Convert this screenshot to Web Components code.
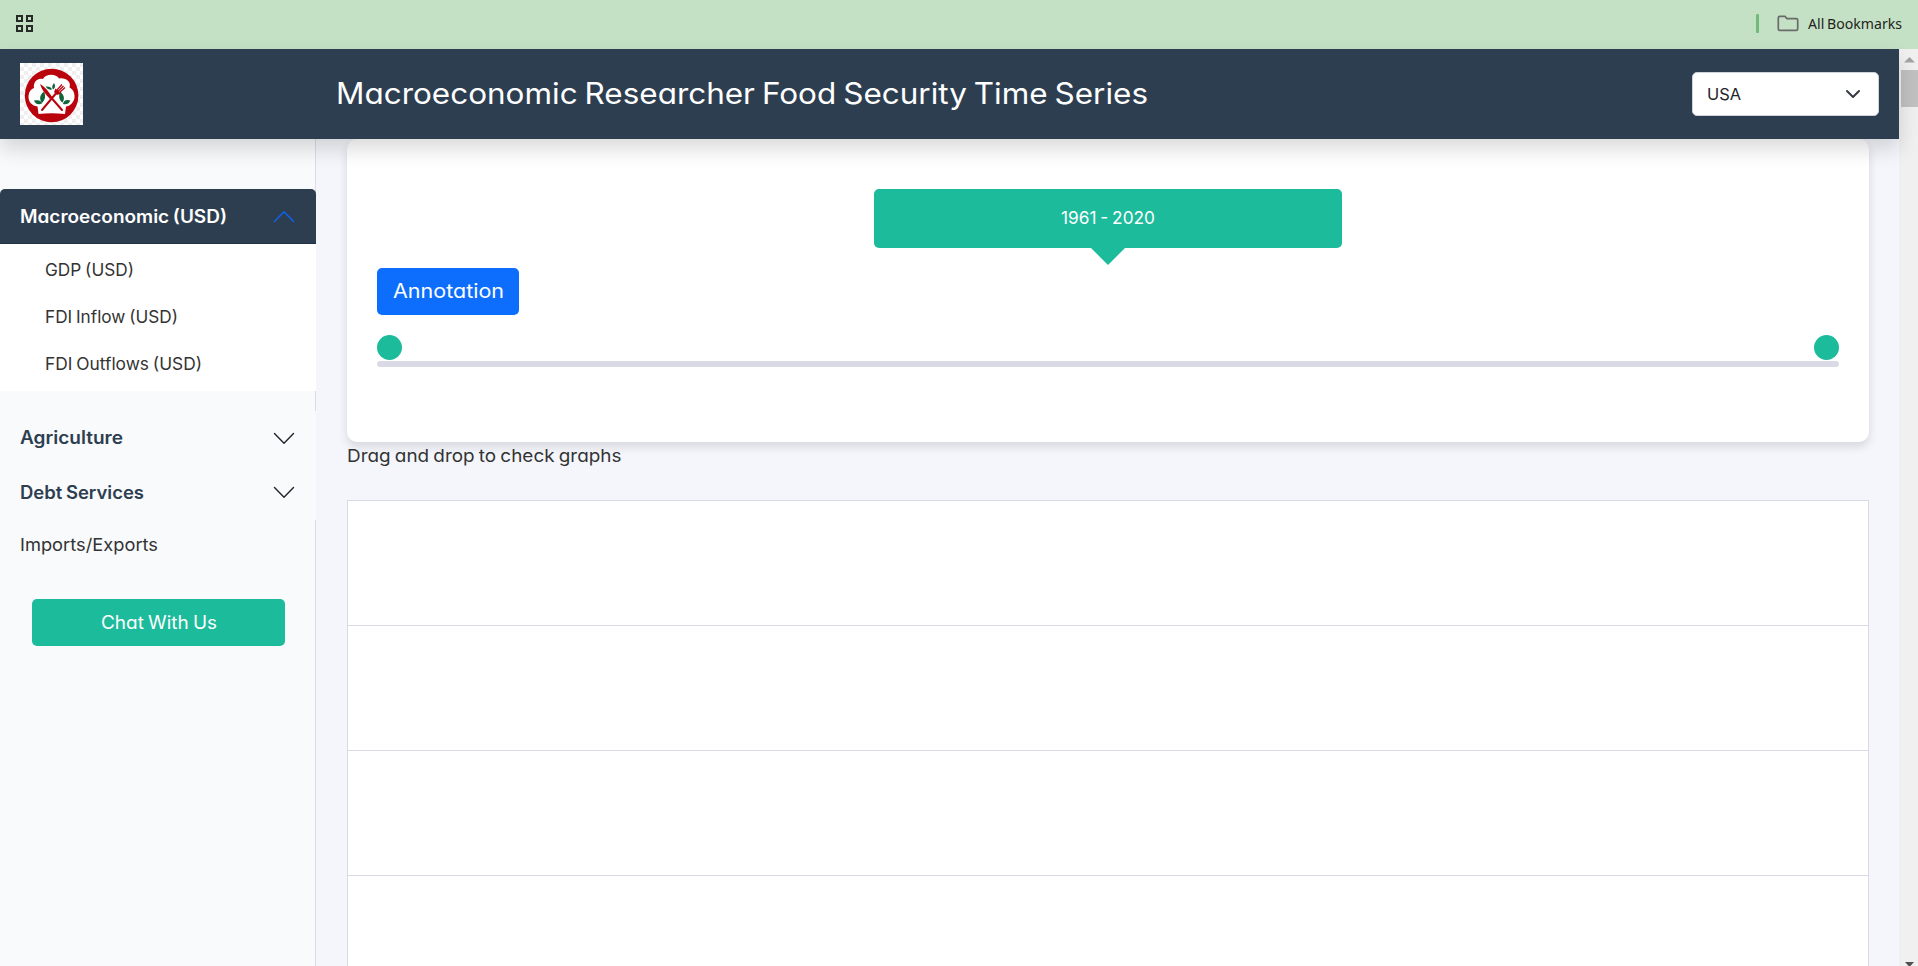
<!DOCTYPE html>
<html lang="en"><head><meta charset="utf-8"><title>Food Security Time Series</title>
<style>
html,body{margin:0;height:100%;overflow:hidden}
body{font-family:Inter,"Open Sans",sans-serif;font-feature-settings:"cv11";color:#212529;background:#f4f6fb}
</style></head><body>
<food-app></food-app>
<script>
const define=(name,html,ready)=>customElements.define(name,class extends HTMLElement{
  constructor(){super();this.attachShadow({mode:'open'}).innerHTML=html;}
  connectedCallback(){if(ready)ready(this);}
});

/* Text widened so that its line is as wide as the w attribute. */
define('fit-text',`<style>:host{display:inline-block;white-space:nowrap;flex:none;vertical-align:top}span{display:inline-block;transform-origin:0 50%;word-spacing:-.06em}</style><span><slot></slot></span>`,el=>{
  const s=el.shadowRoot.querySelector('span'),w=+el.getAttribute('w');
  s.style.transform='scaleX('+w/s.getBoundingClientRect().width+')';
  el.style.width=w+'px';
});

define('bookmarks-bar',`<style>
:host{display:flex;box-sizing:border-box;height:49px;background:#c5e1c5;align-items:center;padding:0 16px 0 15px;font:15px "Noto Sans","Open Sans",sans-serif;color:#1f2420}
.g{flex:1;height:20px}.bar{width:3px;height:19px;border-radius:1px;background:#72b97a;margin-right:18px;margin-top:-2px}
.f{margin-right:9px;margin-top:-2px}fit-text{line-height:20px;margin-top:-3px}svg{display:block}
</style><div class="g"><svg width="20" height="20" viewBox="0 0 20 20" fill="none" stroke="#272b28" stroke-width="2"><path d="M2 1h5v5H2zM12 1h5v5h-5zM2 11h5v5H2zM12 11h5v5h-5z"/></svg></div>
<div class="bar"></div><svg class="f" width="22" height="17" viewBox="0 0 22 17" fill="none" stroke="#686b69" stroke-width="1.7"><path d="M2.8 1.3h5.1l2 2.3h9.3q1.5 0 1.5 1.5v8.8q0 1.5-1.5 1.5H2.8q-1.5 0-1.5-1.5V2.8q0-1.5 1.5-1.5z"/></svg>
<fit-text w="94">All Bookmarks</fit-text>`);

define('brand-logo',`<style>:host{display:block;width:63px;height:62px}svg{display:block}</style>
<svg width="63" height="62" viewBox="0 0 63 62"><defs><pattern id="c" width="8" height="8" patternUnits="userSpaceOnUse"><path fill="#fff" d="M0 0h8v8H0z"/><path fill="#efefef" d="M4 0h4v4H4zM0 4h4v4H0z"/></pattern></defs>
<path fill="url(#c)" d="M0 0h63v62H0z"/><circle cx="31.6" cy="32.5" r="26.8" fill="#b9030d"/>
<path fill="#fff" d="M18.500 51 17.500 43.500C11 42.500 8.500 38 8.500 34 8.500 29 11 26 14 25 13 18.500 18 14.500 23 16 26 10.500 36 10.500 39 15.500 46 14.500 51.500 19 49.500 24.500 53 26 55 30.500 54.500 34.500 54 39 50 43.500 46 43.500L45 51Q31 49.500 18.500 51z"/>
<g fill="#11633a"><path d="M24 28.500c-5 4-4.500 8-2 11.500C26 36 25.500 32 24 28.500zM14 37.500c5-1 7 0 8 3-4 2-7 0-8-3zM40 28.500c5 4 4.500 8 2.500 11-3.500-2-4-6.500-2.500-11zM50.500 37.500c-4-1.500-7 0-7.500 3.500 4 1 6-.5 7.500-3.500zM25.500 23.500q5.500-.5 6.500 3-4 1-6.500-3zM34 20q2.500 4-1 6.500-2-3 1-6.500z"/></g>
<path stroke="#b9030d" stroke-width="2" stroke-linecap="round" fill="none" d="M22 47 38 28M42 47 28 31"/><path fill="#b9030d" d="M20 21q6 3 12 13l-2 2Q22 28 20 21z"/><path fill="none" stroke="#b9030d" stroke-width="1.200" d="M37 27l5-5.500M38.500 28l5-5M39.500 29.500l5.500-5"/><path fill="#b9030d" d="M35.500 25.500 41 30.500 37 32 34 29z"/></svg>`);

define('country-select',`<style>:host{display:flex;box-sizing:border-box;width:187px;height:44px;background:#fff;border:1px solid #ced4da;border-radius:5px;align-items:center;justify-content:space-between;padding:0 17px 0 14px;font-size:16.500px;line-height:42px}svg{display:block}</style><fit-text w="34">USA</fit-text><svg width="16" height="10" viewBox="0 0 16 10" fill="none" stroke="#343a40" stroke-width="2" stroke-linecap="round" stroke-linejoin="round"><path d="m2 2 6 6 6-6"/></svg>`);

define('app-header',`<style>:host{display:flex;box-sizing:border-box;height:90px;background:#2d3e50;align-items:center;padding:0 20px;position:relative;z-index:2;box-shadow:0 10px 20px rgba(0,0,0,.15)}
.t{flex:1;margin-left:253px;color:#fff;font-size:29.500px;line-height:42px;height:44px}</style><brand-logo></brand-logo><div class="t"><fit-text w="812">Macroeconomic Researcher Food Security Time Series</fit-text></div><country-select></country-select>`);

define('menu-heading',`<style>:host{display:flex;box-sizing:border-box;width:316px;height:55px;background:#f8fafc;color:#2d3e50;padding:0 21.500px 0 20px;align-items:center;justify-content:space-between;font-weight:600;font-size:18px;--c:#212529}
:host([open]){background:#2d3e50;color:#fff;border-radius:5px 5px 0 0;box-shadow:inset 0 -1px 0 #223142;--c:#0d63f2}:host([open]) svg{transform:scaleY(-1)}svg{display:block}</style><slot></slot><svg width="22" height="13" viewBox="0 0 22 13" fill="none" stroke="var(--c)" stroke-width="1.400" stroke-linecap="round" stroke-linejoin="round"><path d="m1.500 1.500 9.500 9.700 9.500-9.700"/></svg>`);

define('side-menu',`<style>:host{display:block;box-sizing:border-box;width:316px;flex:none;border-right:1px solid #dcdde3;background:#f8fafc;padding-top:50px}
.sub{width:316px;height:147px;background:#fff;box-sizing:border-box;padding:3px 0 0 44.500px;font-size:17px;margin-bottom:20px;color:#333}.sub div{height:47px;line-height:47px}
.link{height:53px;line-height:49px;padding-left:20px;font-size:17.500px;color:#333}
.chat{margin:26px 30px 0 32px;height:47px;border-radius:5px;background:#1cbb9b;color:#fff;display:flex;justify-content:center;line-height:47px;font-size:18px}.sub~menu-heading{height:54px}.sub~menu-heading+menu-heading{height:55px}.sub~menu-heading fit-text{margin-top:-1px}</style>
<menu-heading open><fit-text w="207">Macroeconomic (USD)</fit-text></menu-heading>
<div class="sub"><div><fit-text w="89">GDP (USD)</fit-text></div><div><fit-text w="133">FDI Inflow (USD)</fit-text></div><div><fit-text w="157">FDI Outflows (USD)</fit-text></div></div>
<menu-heading><fit-text w="103">Agriculture</fit-text></menu-heading><menu-heading><fit-text w="124">Debt Services</fit-text></menu-heading>
<div class="link"><fit-text w="138">Imports/Exports</fit-text></div><div class="chat"><fit-text w="116">Chat With Us</fit-text></div>`);

define('year-range',`<style>:host{display:block;box-sizing:border-box;height:303px;background:#fff;border-radius:10px;padding:50px 30px 0;box-shadow:0 5px 10px rgba(0,0,0,.12)}
.tip{width:468px;height:59px;margin:0 auto;background:#1cbb9b;border-radius:5px;color:#fff;font-size:17.500px;line-height:58px;display:flex;justify-content:center;position:relative}
.tip:after{content:"";position:absolute;top:59px;left:217px;border:17px solid transparent;border-top-color:#1cbb9b;border-bottom:0}
.btn{margin-top:20px;width:142px;height:47px;border-radius:5px;background:#0d6efd;color:#fff;font-size:19.500px;line-height:47px;display:flex;justify-content:center}
.k{display:flex;justify-content:space-between;margin-top:20px}.k i{width:25px;height:25px;border-radius:50%;background:#1cbb9b}.track{height:6px;margin-top:1px;border-radius:3px;background:#d9dae5}</style>
<div class="tip"><fit-text w="94">1961 - 2020</fit-text></div><div class="btn"><fit-text w="111">Annotation</fit-text></div><div class="k"><i></i><i></i></div><div class="track"></div>`);

define('graph-slots',`<style>:host{display:block;box-sizing:border-box;border:1px solid #d9dae3;background:#fff}div{height:124px;border-bottom:1px solid #d9dae3}</style><div></div><div></div><div></div><div></div>`);

define('scroll-rail',`<style>:host{display:block;width:19px;flex:none;background:#f0f0f0;box-sizing:border-box;height:917px;overflow:hidden}.u{height:21px;display:flex;align-items:end;padding-left:5px;padding-bottom:7px;box-sizing:border-box}.t{height:37px;margin-left:2px;background:#c1c1c1}svg{display:block}.d{margin:855px 0 0 6px}</style><div class="u"><svg width="11" height="6"><path d="M5.500 0 11 5.500H0z" fill="#a3a3a3"/></svg></div><div class="t"></div><svg class="d" width="9" height="5"><path d="M0 0h9L4.500 5z" fill="#505050"/></svg>`);

define('food-app',`<style>:host{display:block;height:966px;overflow:hidden}.page{display:flex;height:917px}.site{flex:1;display:flex;flex-direction:column}.body{flex:1;display:flex;min-height:0}
main{flex:1;padding:0 30px 0 31px;overflow:hidden;background:#f4f6fb}.hint{height:58px;font-size:17.500px;line-height:28px;color:#333}.hint fit-text{margin-left:-.5px}</style>
<bookmarks-bar></bookmarks-bar><div class="page"><div class="site"><app-header></app-header><div class="body"><side-menu></side-menu><main><year-range></year-range><div class="hint"><fit-text w="274.5">Drag and drop to check graphs</fit-text></div><graph-slots></graph-slots></main></div></div><scroll-rail></scroll-rail></div>`);
</script></body></html>
